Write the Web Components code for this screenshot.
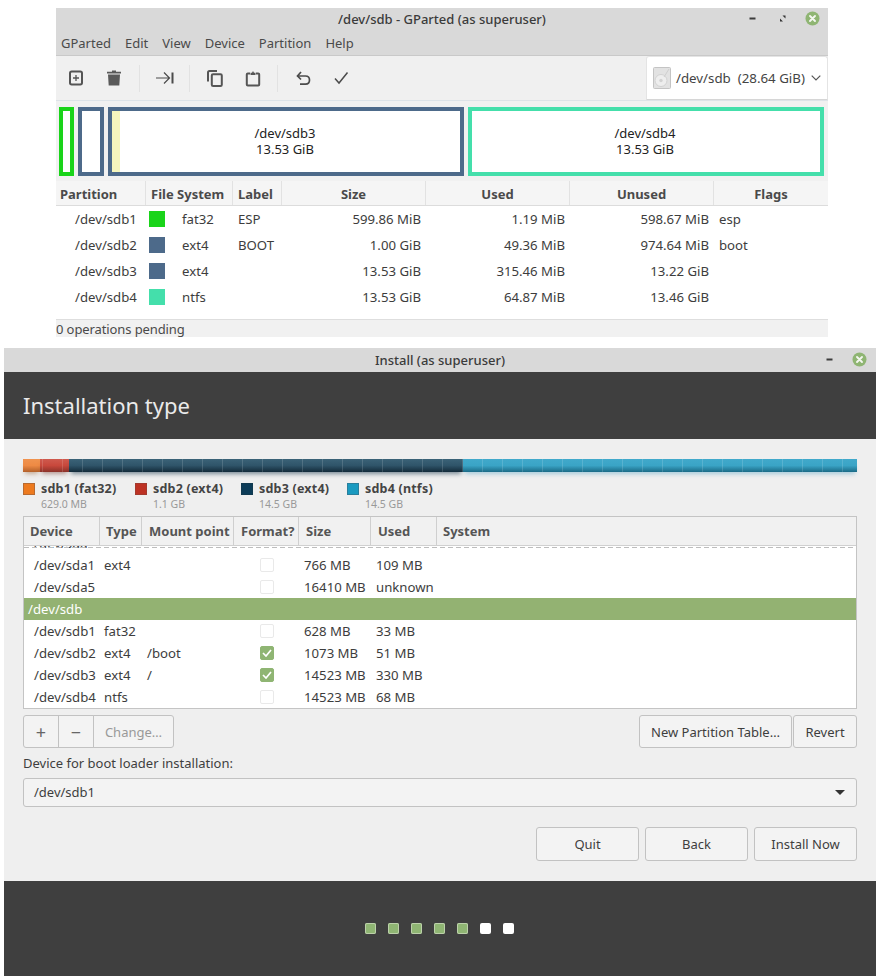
<!DOCTYPE html>
<html lang="en">
<head>
<meta charset="utf-8">
<title>GParted and Install</title>
<style>
  html, body { margin: 0; background: #fff; }
  body {
    width: 879px;
    height: 979px;
    overflow: hidden;
    font-family: "Noto Sans", "Open Sans", sans-serif;
    font-size: 13px;
    color: #3a3a3a;
  }
</style>
</head>
<body>
<gparted-window></gparted-window>
<install-window></install-window>

<script>
// shared bits of css for the flat mint-y buttons
const BUTTON_CSS = `
  .btn {
    display: flex; align-items: center; justify-content: center;
    box-sizing: border-box;
    background: #f3f3f3;
    border: 1px solid #c2c2c2;
    border-radius: 3px;
    color: #3e3e3e;
    font-size: 13px;
  }
`;

class WinControls extends HTMLElement {
  constructor() {
    super();
    this.attachShadow({ mode: "open" });
  }
  connectedCallback() {
    const maximize = this.hasAttribute("maximize");
    this.shadowRoot.innerHTML = `
      <style>
        :host { display: flex; align-items: center; gap: 15px; }
        svg { display: block; }
      </style>
      <svg width="15" height="15" viewBox="0 0 15 15"><rect x="4.500" y="6.500" width="6" height="2" fill="#3c3c3c"/></svg>
      ${maximize ? `<svg width="15" height="15" viewBox="0 0 15 15"><path d="M7.500 4.500h3v3zM5 7.500l3 3H5z" fill="#333"/></svg>` : ""}
      <svg width="15" height="15" viewBox="0 0 15 15">
        <circle cx="7.5" cy="7.5" r="7" fill="#8fb573"/>
        <path d="M5 5l5 5M10 5l-5 5" stroke="#f4f7f0" stroke-width="1.9" stroke-linecap="round"/>
      </svg>
    `;
  }
}
customElements.define("win-controls", WinControls);

class GpToolbar extends HTMLElement {
  constructor() {
    super();
    this.attachShadow({ mode: "open" });
  }
  connectedCallback() {
    const stroke = `fill="none" stroke="#555" stroke-width="2"`;
    this.shadowRoot.innerHTML = `
      <style>
        :host {
          display: flex; align-items: stretch;
          height: 45px; box-sizing: border-box;
          background: #f0f0f0;
          border-top: 1px solid #c9c9c9;
        }
        .tools { flex: 1; display: flex; align-items: center; padding-left: 9px; }
        .tool { width: 22px; height: 22px; display: flex; align-items: center; justify-content: center; }
        .sep { width: 1px; height: 27px; background: #e2e2e2; }
        svg { display: block; }
        .combo {
          width: 182px; box-sizing: border-box;
          display: flex; align-items: center;
          padding-left: 6px;
          background: #fff;
          border: 1px solid #e4e4e4; border-bottom-color: #d6d6d6;
          border-radius: 3px 3px 0 0;
          color: #444; font-size: 13.3px; white-space: pre;
        }
        .combo span { margin-left: 5px; flex: 1; }
      </style>
      <div class="tools">
        <div class="tool" style="margin-right:16px"><svg width="16" height="16" viewBox="0 0 16 16"><rect x="2" y="1.500" width="12" height="13" rx="1.700" ${stroke}/><path d="M8 5v6M5 8h6" stroke="#555" stroke-width="1.300"/></svg></div>
        <div class="tool" style="margin-right:14px"><svg width="16" height="16" viewBox="0 0 16 16"><path d="M6 .500h4v1.300h5V3.500H1V1.800h5zM2 4.600h12l-.7 10.900H2.700z" fill="#5a5a5a"/></svg></div>
        <div class="sep" style="margin-right:14px"></div>
        <div class="tool" style="margin-right:13px"><svg width="18" height="14" viewBox="0 0 18 14"><path d="M0 7h13M8 1.500 13.500 7 8 12.500" fill="none" stroke="#4b4b4b" stroke-width="1.200"/><path d="M16.500 1.500v11" stroke="#4b4b4b" stroke-width="2"/></svg></div>
        <div class="sep" style="margin-right:14px"></div>
        <div class="tool" style="margin-right:16px"><svg width="16" height="17" viewBox="0 0 16 17"><path d="M1 11.500V2.500Q1 1 2.500 1H10" ${stroke}/><rect x="4.800" y="4.300" width="10" height="11.700" rx="1.300" ${stroke}/></svg></div>
        <div class="tool" style="margin-right:13px"><svg width="16" height="17" viewBox="0 0 16 17"><path d="M5 3.500H2.800Q1.800 3.500 1.800 4.500V14.500Q1.800 15.500 2.800 15.500H13.200Q14.200 15.500 14.200 14.500V4.500Q14.200 3.500 13.200 3.500H11" ${stroke}/><path d="M5.500 5V2.700H7L8 1l1 1.700h1.500V5z" fill="#555"/></svg></div>
        <div class="sep" style="margin-right:14px"></div>
        <div class="tool" style="margin-right:16px"><svg width="16" height="15" viewBox="0 0 16 15"><path d="M2.500 5h8Q14.500 5 14.500 9t-4 4.200H5" fill="none" stroke="#4b4b4b" stroke-width="1.700"/><path d="M6 1 2.500 5 6 8.500" fill="none" stroke="#4b4b4b" stroke-width="1.700"/></svg></div>
        <div class="tool"><svg width="16" height="14" viewBox="0 0 16 14"><path d="M2 7.500 6 12 14.500 1.500" fill="none" stroke="#4b4b4b" stroke-width="1.500"/></svg></div>
      </div>
      <div class="combo">
        <svg width="18" height="22" viewBox="0 0 18 22">
          <rect x=".5" y=".5" width="17" height="21" rx="1" fill="#e2e2e2" stroke="#c4c4c4"/>
          <circle cx="8" cy="13.500" r="6" fill="#eee" stroke="#d2d2d2"/>
          <circle cx="8" cy="13.500" r="1.700" fill="#d2d2d2"/>
          <path d="M16 2 11 10" stroke="#cfcfcf"/>
        </svg>
        <span>/dev/sdb  (28.64 GiB)</span>
        <svg style="margin-right:6px" width="10" height="6" viewBox="0 0 10 6"><path d="M.7.700 5 5 9.300.700" fill="none" stroke="#555" stroke-width="1.200"/></svg>
      </div>
    `;
  }
}
customElements.define("gp-toolbar", GpToolbar);

// one box in the disk graph, width comes from the host page
class PartBox extends HTMLElement {
  constructor() {
    super();
    this.attachShadow({ mode: "open" });
  }
  connectedCallback() {
    const color = this.getAttribute("color");
    const used = this.getAttribute("used") || 0;
    this.shadowRoot.innerHTML = `
      <style>
        :host {
          display: flex; box-sizing: border-box;
          align-items: center; justify-content: center;
          padding: 0 2px 2px 0;
          border: 4px solid ${color};
          background: linear-gradient(90deg, #f6f6bd ${used}px, #fff ${used}px);
          font-size: 13px; line-height: 16px; color: #222;
          text-align: center; white-space: pre-line;
        }
      </style>
      <slot></slot>
    `;
  }
}
customElements.define("part-box", PartBox);

class GpGraph extends HTMLElement {
  constructor() {
    super();
    this.attachShadow({ mode: "open" });
  }
  connectedCallback() {
    this.shadowRoot.innerHTML = `
      <style>
        :host {
          display: flex; gap: 4px;
          height: 81px; box-sizing: border-box;
          padding: 6px 4px 5px 3px;
          background: #f1f1f1;
          border-top: 1px solid #dde3e8;
        }
        part-box { flex: none; }
      </style>
      <part-box color="#1ad41a" style="width:15px"></part-box>
      <part-box color="#4d6a8a" style="width:26px"></part-box>
      <part-box color="#4d6a8a" used="8" style="width:356px">/dev/sdb3
13.53 GiB</part-box>
      <part-box color="#44dfab" style="width:356px">/dev/sdb4
13.53 GiB</part-box>
    `;
  }
}
customElements.define("gp-graph", GpGraph);

class GpTable extends HTMLElement {
  constructor() {
    super();
    this.attachShadow({ mode: "open" });
  }
  connectedCallback() {
    const rows = [
      ["/dev/sdb1", "#1ad41a", "fat32", "ESP", "599.86 MiB", "1.19 MiB", "598.67 MiB", "esp"],
      ["/dev/sdb2", "#4d6a8a", "ext4", "BOOT", "1.00 GiB", "49.36 MiB", "974.64 MiB", "boot"],
      ["/dev/sdb3", "#4d6a8a", "ext4", "", "13.53 GiB", "315.46 MiB", "13.22 GiB", ""],
      ["/dev/sdb4", "#44dfab", "ntfs", "", "13.53 GiB", "64.87 MiB", "13.46 GiB", ""],
    ];
    this.shadowRoot.innerHTML = `
      <style>
        :host { display: block; background: #fff; height: 138px; box-sizing: border-box; font-size: 13.2px; }
        .grid { display: grid; grid-template-columns: 90px 87px 49px 144px 144px 144px 114px; }
        .head {
          height: 25px; background: #f5f5f5;
          border-bottom: 1px solid #dcdcdc; box-sizing: border-box;
          font-size: 13px; font-weight: 700; color: #4a4a4a;
        }
        .head div { display: flex; align-items: center; padding: 2px 0 0 5px; border-right: 1px solid #e2e2e2; }
        .head div:first-child { padding-left: 4px; }
        .head .c { justify-content: center; padding-left: 0; }
        .head div:last-child { border-right: 0; }
        .row { height: 26px; align-items: center; color: #3d3d3d; }
        .r { text-align: right; padding-right: 5px; }
        .dev { padding-left: 19px; }
        .fs { display: flex; align-items: center; padding-left: 3px; }
        .fs i { width: 16px; height: 16px; margin-right: 17px; }
        .lbl { padding-left: 5px; }
      </style>
      <div class="grid head">
        <div>Partition</div><div>File System</div><div>Label</div>
        <div class="c">Size</div><div class="c">Used</div><div class="c">Unused</div><div class="c">Flags</div>
      </div>
      ${rows.map((r) => `
        <div class="grid row">
          <div class="dev">${r[0]}</div>
          <div class="fs"><i style="background:${r[1]}"></i>${r[2]}</div>
          <div class="lbl">${r[3]}</div>
          <div class="r">${r[4]}</div><div class="r">${r[5]}</div><div class="r">${r[6]}</div>
          <div class="lbl">${r[7]}</div>
        </div>`).join("")}
    `;
  }
}
customElements.define("gp-table", GpTable);

class GpartedWindow extends HTMLElement {
  constructor() {
    super();
    this.attachShadow({ mode: "open" });
  }
  connectedCallback() {
    this.shadowRoot.innerHTML = `
      <style>
        :host { display: block; width: 772px; margin: 8px 0 0 56px; }
        .top { height: 47px; box-sizing: border-box; background: #d9d9d9; }
        .title { height: 22px; display: flex; align-items: center; justify-content: center; position: relative; font-weight: 500; color: #3b3b3b; }
        win-controls { position: absolute; right: 8px; top: 3px; }
        .menu { display: flex; gap: 14px; padding-left: 5px; height: 25px; align-items: center; color: #4a4a4a; }
        .status {
          height: 18px; box-sizing: border-box; display: flex; align-items: center;
          background: #f1f1f1; border-top: 1px solid #dedede; color: #4a4a4a;
          letter-spacing: -.1px;
        }
      </style>
      <div class="top">
        <div class="title">/dev/sdb - GParted (as superuser)<win-controls maximize></win-controls></div>
        <div class="menu"><span>GParted</span><span>Edit</span><span>View</span><span>Device</span><span>Partition</span><span>Help</span></div>
      </div>
      <gp-toolbar></gp-toolbar>
      <gp-graph></gp-graph>
      <gp-table></gp-table>
      <div class="status">0 operations pending</div>
    `;
  }
}
customElements.define("gparted-window", GpartedWindow);

class UsageBar extends HTMLElement {
  constructor() {
    super();
    this.attachShadow({ mode: "open" });
  }
  connectedCallback() {
    // ticks sit every 20px; shift lines them up inside each segment
    const seg = (w, shift, top, mid, bot, glow) => `
      <div style="width:${w}px;background:
        linear-gradient(90deg,transparent 19px,rgba(255,255,255,.14) 19px) ${shift}px 0 / 20px 100%,
        linear-gradient(${top},${mid} 50%,${bot});box-shadow:0 4px 4px -2px ${glow}"></div>`;
    this.shadowRoot.innerHTML = `
      <style>
        :host { display: flex; height: 13px; }
      </style>
      ${seg(17, 0, "#f0934f", "#ee8a44", "#b3602a", "rgba(160,110,70,.5)")}
      ${seg(29, 3, "#cf5a4e", "#c8483c", "#8c3229", "rgba(130,70,60,.5)")}
      ${seg(394, -6, "#3b6378", "#2f5469", "#132b3a", "rgba(30,60,80,.55)")}
      ${seg(394, 0, "#41a9cb", "#3aa4c6", "#1b6b87", "rgba(60,150,190,.4)")}
    `;
  }
}
customElements.define("usage-bar", UsageBar);

class LegendItem extends HTMLElement {
  constructor() {
    super();
    this.attachShadow({ mode: "open" });
  }
  connectedCallback() {
    this.shadowRoot.innerHTML = `
      <style>
        :host { display: grid; grid-template-columns: 12px auto; column-gap: 6px; align-content: start; }
        i { width: 12px; height: 12px; box-sizing: border-box; background: ${this.getAttribute("color")}; border: 1px solid ${this.getAttribute("edge")}; margin-top: 1px; }
        b { font-size: 12.5px; line-height: 13px; color: #444; letter-spacing: .2px; }
        span { grid-column: 2; margin-top: 3px; font-size: 10.5px; line-height: 13px; color: #999; }
      </style>
      <i></i><b>${this.getAttribute("name")}</b><span>${this.getAttribute("size")}</span>
    `;
  }
}
customElements.define("legend-item", LegendItem);

class PartitionList extends HTMLElement {
  constructor() {
    super();
    this.attachShadow({ mode: "open" });
  }
  connectedCallback() {
    const rows = [
      ["/dev/sda1", "ext4", "", 0, "766 MB", "109 MB"],
      ["/dev/sda5", "", "", 0, "16410 MB", "unknown"],
      null,
      ["/dev/sdb1", "fat32", "", 0, "628 MB", "33 MB"],
      ["/dev/sdb2", "ext4", "/boot", 1, "1073 MB", "51 MB"],
      ["/dev/sdb3", "ext4", "/", 1, "14523 MB", "330 MB"],
      ["/dev/sdb4", "ntfs", "", 0, "14523 MB", "68 MB"],
    ];
    const check = (on) => on
      ? `<span class="chk on"><svg width="10" height="8" viewBox="0 0 10 8"><path d="M1 4l3 3 5-6" fill="none" stroke="#fff" stroke-width="1.700"/></svg></span>`
      : `<span class="chk"></span>`;
    this.shadowRoot.innerHTML = `
      <style>
        :host {
          display: block; height: 193px; box-sizing: border-box;
          border: 1px solid #c4c4c4; background: #fff; font-size: 13.2px;
        }
        .grid { display: grid; grid-template-columns: 76px 42px 92px 65px 72px 66px 1fr; }
        .head { height: 29px; background: #f1f1f1; font-size: 13px; font-weight: 700; color: #555; box-sizing: border-box; border-bottom: 1px solid #d0d0d0; }
        .head div { display: flex; align-items: center; padding-left: 6px; border-right: 1px solid #cfcfcf; }
        .head div:nth-child(3), .head div:nth-child(4), .head div:nth-child(5), .head div:nth-child(6) { padding-left: 7px; }
        .head div:last-child { border-right: 0; }
        .body { height: 162px; overflow: hidden; position: relative; }
        .clip { height: 22px; margin-top: -14px; padding-left: 10px; line-height: 22px; color: #3d3d3d; }
        .dash {
          position: absolute; left: 0; right: 0; top: 1px; height: 1px;
          background: repeating-linear-gradient(90deg, #bdbdbd 0 5px, transparent 5px 8px);
        }
        .row { height: 22px; align-items: center; color: #3d3d3d; }
        .row > div { white-space: nowrap; }
        .dev { padding-left: 10px; }
        .ty { padding-left: 4px; }
        .mp { padding-left: 5px; }
        .fm { display: flex; justify-content: center; }
        .sz { padding-left: 5px; }
        .us { padding-left: 5px; }
        .chk { width: 14px; height: 14px; box-sizing: border-box; border: 1px solid #e9e9e9; border-radius: 2px; display: flex; align-items: center; justify-content: center; background: #fff; }
        .chk.on { background: #8fb573; border-color: #8fb573; }
        .sel { height: 22px; background: #93b272; color: #fff; padding-left: 4px; line-height: 22px; }
      </style>
      <div class="grid head">
        <div>Device</div><div>Type</div><div>Mount point</div><div>Format?</div><div>Size</div><div>Used</div><div>System</div>
      </div>
      <div class="body">
        <div class="clip">/dev/sda</div>
        <div class="dash"></div>
        ${rows.map((r) => r === null
          ? `<div class="sel">/dev/sdb</div>`
          : `<div class="grid row">
              <div class="dev">${r[0]}</div><div class="ty">${r[1]}</div><div class="mp">${r[2]}</div>
              <div class="fm">${check(r[3])}</div><div class="sz">${r[4]}</div><div class="us">${r[5]}</div><div></div>
            </div>`).join("")}
      </div>
    `;
  }
}
customElements.define("partition-list", PartitionList);

class InstallWindow extends HTMLElement {
  constructor() {
    super();
    this.attachShadow({ mode: "open" });
  }
  connectedCallback() {
    const dots = [1, 1, 1, 1, 1, 0, 0];
    this.shadowRoot.innerHTML = `
      <style>
        ${BUTTON_CSS}
        :host { display: block; width: 872px; margin: 11px 0 0 4px; background: #efefef; }
        .title { height: 24px; display: flex; align-items: center; justify-content: center; position: relative; background: #d9d9d9; color: #3b3b3b; font-weight: 500; }
        win-controls { position: absolute; right: 9px; top: 4px; }
        .head { height: 67px; box-sizing: border-box; padding: 0 0 2px 19px; background: #3f3f3f; color: #eaeaea; display: flex; align-items: center; font-size: 22px; }
        .main { height: 442px; box-sizing: border-box; padding: 20px 19px 0; display: flex; flex-direction: column; }
        .legend { display: flex; margin-top: 10px; height: 34px; }
        legend-item:nth-child(1) { width: 112px; }
        legend-item:nth-child(2) { width: 106px; }
        legend-item:nth-child(3) { width: 106px; }
        .actions { display: flex; margin-top: 6px; height: 33px; }
        .group { display: flex; }
        .group .btn { border-radius: 0; margin-left: -1px; }
        .group .btn:first-child { border-radius: 3px 0 0 3px; margin-left: 0; }
        .group .btn:last-child { border-radius: 0 3px 3px 0; }
        .muted { color: #999; }
        .spacer { flex: 1; }
        .lbl { margin-top: 7px; height: 16px; line-height: 16px; color: #3e3e3e; }
        .combo { margin-top: 7px; height: 29px; display: flex; align-items: center; justify-content: space-between; padding: 0 11px 2px 10px; box-sizing: border-box; background: #f3f3f3; border: 1px solid #c2c2c2; border-radius: 3px; color: #3e3e3e; }
        .combo i { width: 0; height: 0; border: 5px solid transparent; border-top: 5px solid #333; border-bottom: 0; margin-top: 2px; }
        .nav { display: flex; justify-content: flex-end; gap: 6px; margin-top: 20px; height: 34px; }
        .foot { height: 95px; box-sizing: border-box; padding-right: 1px; background: #3f3f3f; display: flex; align-items: center; justify-content: center; gap: 12px; }
        .foot i { width: 11px; height: 11px; border-radius: 2px; background: #fff; }
        .foot i.on { background: #8fb573; box-shadow: inset 0 0 0 1px #bcd0aa; }
      </style>
      <div class="title">Install (as superuser)<win-controls></win-controls></div>
      <div class="head">Installation type</div>
      <div class="main">
        <usage-bar></usage-bar>
        <div class="legend">
          <legend-item color="#ed7a1f" edge="#b86a30" name="sdb1 (fat32)" size="629.0 MB"></legend-item>
          <legend-item color="#bd3224" edge="#a33a2e" name="sdb2 (ext4)" size="1.1 GB"></legend-item>
          <legend-item color="#0c3c58" edge="#123a50" name="sdb3 (ext4)" size="14.5 GB"></legend-item>
          <legend-item color="#1a9ac0" edge="#2a7f9c" name="sdb4 (ntfs)" size="14.5 GB"></legend-item>
        </div>
        <partition-list></partition-list>
        <div class="actions">
          <div class="group">
            <div class="btn" style="width:36px;font-size:18px;color:#666">+</div>
            <div class="btn" style="width:36px;font-size:18px;color:#666">−</div>
            <div class="btn muted" style="width:81px">Change…</div>
          </div>
          <div class="spacer"></div>
          <div class="btn" style="width:153px">New Partition Table…</div>
          <div class="btn" style="width:64px;margin-left:1px">Revert</div>
        </div>
        <div class="lbl">Device for boot loader installation:</div>
        <div class="combo"><span>/dev/sdb1</span><i></i></div>
        <div class="nav">
          <div class="btn" style="width:103px">Quit</div>
          <div class="btn" style="width:103px">Back</div>
          <div class="btn" style="width:103px">Install Now</div>
        </div>
      </div>
      <div class="foot">${dots.map((d) => `<i class="${d ? "on" : ""}"></i>`).join("")}</div>
    `;
  }
}
customElements.define("install-window", InstallWindow);
</script>
</body>
</html>
